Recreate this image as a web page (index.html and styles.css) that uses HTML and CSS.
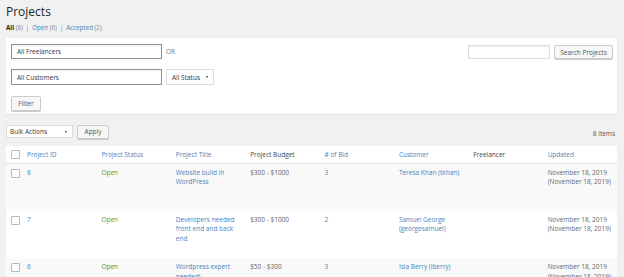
FILE: index.html
```html
<!DOCTYPE html>
<html>
<head>
<meta charset="utf-8">
<link rel="stylesheet" href="styles.css">
</head>
<body>
<h1 class="title">Projects</h1>
<ul class="subnav">
  <li><span class="current">All</span> <span class="count">(8)</span></li>
  <li class="sep">|</li>
  <li><a>Open</a> <span class="count">(6)</span></li>
  <li class="sep">|</li>
  <li><a>Accepted</a> <span class="count">(2)</span></li>
</ul>
<div class="panel">
  <div class="prow">
    <div class="field wide">All Freelancers</div>
    <span class="or">OR</span>
    <div class="spacer"></div>
    <div class="field search"></div>
    <div class="btn sbtn">Search Projects</div>
  </div>
  <div class="prow r2">
    <div class="field wide tall">All Customers</div>
    <div class="field select status">All Status <span class="arrow"></span></div>
  </div>
  <div class="prow r3">
    <div class="btn fbtn">Filter</div>
  </div>
</div>
<div class="tablenav">
  <div class="field select bulk">Bulk Actions <span class="arrow"></span></div>
  <div class="btn apply">Apply</div>
  <div class="spacer"></div>
  <span class="items">8 items</span>
</div>
<table class="list">
  <colgroup><col class="c0"><col><col><col><col><col><col><col><col></colgroup>
  <thead>
    <tr>
      <th><span class="cb"></span></th>
      <th><a>Project ID</a></th>
      <th><a>Project Status</a></th>
      <th><a>Project Title</a></th>
      <th>Project Budget</th>
      <th><a># of Bid</a></th>
      <th><a>Customer</a></th>
      <th>Freelancer</th>
      <th><a>Updated</a></th>
    </tr>
  </thead>
  <tbody>
    <tr class="alt">
      <td><span class="cb"></span></td>
      <td><a>8</a></td>
      <td class="open">Open</td>
      <td><a>Website build in WordPress</a></td>
      <td>$300 - $1000</td>
      <td><a>3</a></td>
      <td><a>Teresa Khan (tkhan)</a></td>
      <td></td>
      <td>November 18, 2019 (November 18, 2019)</td>
    </tr>
    <tr>
      <td><span class="cb"></span></td>
      <td><a>7</a></td>
      <td class="open">Open</td>
      <td><a>Developers needed front end and back end</a></td>
      <td>$300 - $1000</td>
      <td><a>2</a></td>
      <td><a>Samuel George (georgesamuel)</a></td>
      <td></td>
      <td>November 18, 2019 (November 18, 2019)</td>
    </tr>
    <tr class="alt">
      <td><span class="cb"></span></td>
      <td><a>6</a></td>
      <td class="open">Open</td>
      <td><a>Wordpress expert needed!</a></td>
      <td>$50 - $300</td>
      <td><a>3</a></td>
      <td><a>Isla Berry (iberry)</a></td>
      <td></td>
      <td>November 18, 2019 (November 18, 2019)</td>
    </tr>
  </tbody>
</table>
</body>
</html>
```
FILE: styles.css
```css
html, body { margin: 0; padding: 0; }
body {
  background: #f1f1f1;
  font-family: "Open Sans", "Noto Sans", sans-serif;
  font-size: 6.5px;
  color: #555;
  padding: 0 7px 0 6px;
  overflow: hidden;
  height: 277px;
}
a { color: #3f85bf; }
.title {
  margin: 0;
  padding-top: 3px;
  font-size: 12px;
  line-height: 18px;
  font-weight: 400;
  color: #23282d;
}
.subnav {
  list-style: none;
  margin: 1px 0 0;
  padding: 0;
  display: flex;
  gap: 3px;
  line-height: 12px;
  font-size: 6.2px;
}
.subnav .current { font-weight: 700; color: #222; }
.subnav .count, .subnav .sep { color: #888; }
.panel {
  margin-top: 4px;
  background: #fff;
  height: 76px;
  box-sizing: border-box;
  padding: 5px 4px 0 5px;
  box-shadow: 0 1px 1px rgba(0,0,0,0.05);
}
.prow { display: flex; align-items: center; gap: 4px; }
.r2 { margin-top: 10px; }
.r3 { margin-top: 11px; }
.field {
  box-sizing: border-box;
  background: #fff;
  border: 1px solid #ccc;
  box-shadow: inset 0 1px 2px rgba(0,0,0,0.07);
  color: #32373c;
  display: flex;
  align-items: center;
  padding: 0 5px;
}
.wide { width: 151px; height: 15px; border-color: #8c8f94; }
.tall { height: 16px; }
.or { color: #777; }
.spacer { flex: 1; }
.search { width: 82px; height: 14px; border-color: #ddd; margin-top: 2px; }
.btn {
  box-sizing: border-box;
  border: 1px solid #ccc;
  background: #f7f7f7;
  border-radius: 2px;
  box-shadow: 0 1px 0 #ccc;
  color: #555;
  display: flex;
  align-items: center;
  justify-content: center;
}
.sbtn { width: 59px; height: 14px; margin-top: 2px; }
.select { position: relative; padding-right: 12px; }
.status { width: 48px; height: 16px; border-color: #ddd; box-shadow: none; }
.arrow {
  position: absolute;
  right: 5px;
  top: 50%;
  margin-top: -1px;
  width: 0; height: 0;
  border-left: 1.5px solid transparent;
  border-right: 1.5px solid transparent;
  border-top: 2.5px solid #333;
}
.fbtn { width: 30px; height: 15px; }
.tablenav {
  display: flex;
  align-items: center;
  gap: 4px;
  margin-top: 10px;
  height: 15px;
}
.bulk { width: 67px; height: 13px; border-color: #ddd; box-shadow: none; padding-left: 3px; }
.apply { width: 32px; height: 14px; }
.items { color: #555; margin-right: 2px; margin-top: 4px; }
.list {
  margin-top: 7px;
  width: 100%;
  table-layout: fixed;
  border-collapse: collapse;
  background: #fff;
}
.c0 { width: 16px; }
.list th, .list td {
  text-align: left;
  vertical-align: top;
  font-weight: 400;
  padding: 4px 5px 0;
  line-height: 9.6px;
}
.list th {
  height: 17px;
  box-sizing: border-box;
  padding-top: 4px;
  border-bottom: 1px solid #e1e1e1;
  color: #444;
}
.list td { height: 47.5px; box-sizing: border-box; color: #666; }
.list tr.alt td { background: #f9f9f9; }
.list th:first-child, .list td:first-child { padding: 4px 0 0 5px; }
.list td:first-child { padding-top: 5px; }
.cb {
  display: block;
  width: 9px;
  height: 9px;
  box-sizing: border-box;
  border: 1px solid #b4b9be;
  background: #fff;
  border-radius: 1px;
}
.list td.open { color: #4c9a3c; }
```
